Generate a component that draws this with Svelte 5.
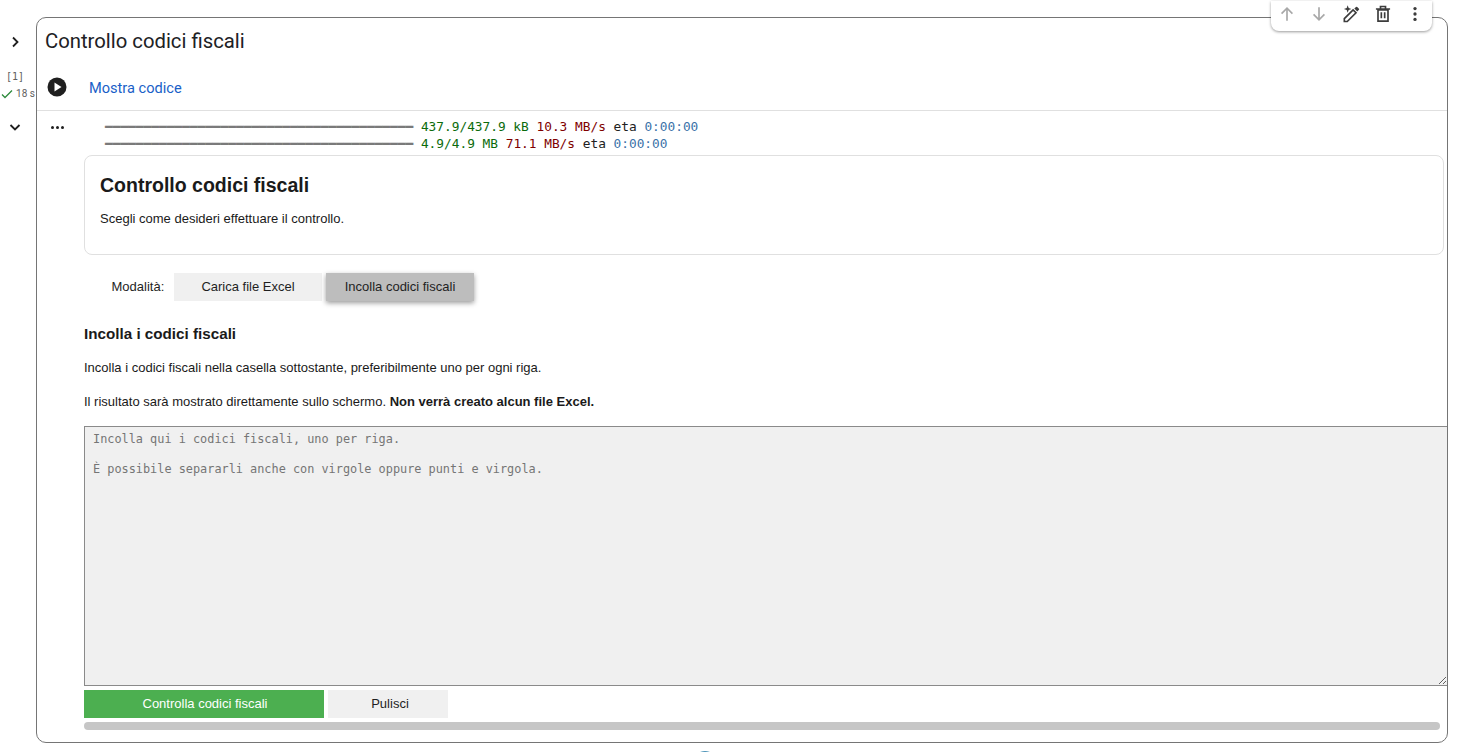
<script>
  const bar = '━'.repeat(40);
</script>

<div class="page">
  <div class="gutter">
    <button class="icon-btn toggle" aria-label="Espandi">
      <svg width="14" height="14" viewBox="0 0 14 14"><path d="M5 2.5 9.5 7 5 11.5" /></svg>
    </button>
    <div class="exec">
      <span class="count">[1]</span>
      <span class="time">
        <svg width="12" height="10" viewBox="0 0 12 10"><path d="M1 5.5 4 8.5 11 1.5" /></svg>
        18 s
      </span>
    </div>
    <button class="icon-btn collapse" aria-label="Comprimi">
      <svg width="14" height="14" viewBox="0 0 14 14"><path d="M2.5 5 7 9.5 11.5 5" /></svg>
    </button>
  </div>

  <div class="cell">
    <div class="toolbar">
      <svg class="muted" width="20" height="20" viewBox="0 0 24 24"><path d="M12 20V5M5.5 11.5 12 5l6.5 6.5" /></svg>
      <svg class="muted" width="20" height="20" viewBox="0 0 24 24"><path d="M12 4v15M5.5 12.5 12 19l6.5-6.5" /></svg>
      <svg width="20" height="20" viewBox="0 0 24 24">
        <path d="M4 21v-3.5L14.5 7l3.5 3.5L7.5 21z" />
        <path class="solid" d="M16 5.5l2-2a1 1 0 0 1 1.4 0l2.1 2.1a1 1 0 0 1 0 1.4l-2 2z" />
        <path class="solid" d="M8 1.5l1.2 3.3 3.3 1.2-3.3 1.2L8 10.5 6.8 7.2 3.5 6l3.3-1.2z" />
      </svg>
      <svg width="20" height="20" viewBox="0 0 24 24">
        <path d="M6 7h12v13.5H6zM3.5 6h17M9 6V3h6v3M10 10v7M14 10v7" />
      </svg>
      <svg width="20" height="20" viewBox="0 0 24 24">
        <circle class="solid" cx="12" cy="5.5" r="2" /><circle class="solid" cx="12" cy="12" r="2" /><circle class="solid" cx="12" cy="18.5" r="2" />
      </svg>
    </div>

    <h2 class="cell-title">Controllo codici fiscali</h2>

    <div class="code-row">
      <button class="run" aria-label="Esegui">
        <svg width="20" height="20" viewBox="0 0 20 20"><circle cx="10" cy="10" r="9.5" fill="#1f1f1f" /><path class="play" d="M7.5 5.5v9l7-4.5z" /></svg>
      </button>
      <a class="show-code" href="#top">Mostra codice</a>
    </div>

    <div class="output">
      <div class="output-dots"><i></i><i></i><i></i></div>
      <div class="output-body">
        <pre class="log"><span class="dim">{bar}</span> <span class="green">437.9/437.9 kB</span> <span class="red">10.3 MB/s</span> eta <span class="blue">0:00:00</span>
<span class="dim">{bar}</span> <span class="green">4.9/4.9 MB</span> <span class="red">71.1 MB/s</span> eta <span class="blue">0:00:00</span></pre>

        <div class="intro">
          <h2>Controllo codici fiscali</h2>
          <p>Scegli come desideri effettuare il controllo.</p>
        </div>

        <div class="modes">
          <span class="modes-label">Modalità:</span>
          <button class="btn mode">Carica file Excel</button>
          <button class="btn mode active">Incolla codici fiscali</button>
        </div>

        <h4>Incolla i codici fiscali</h4>
        <p class="line">Incolla i codici fiscali nella casella sottostante, preferibilmente uno per ogni riga.</p>
        <p class="line">Il risultato sarà mostrato direttamente sullo schermo. <b>Non verrà creato alcun file Excel.</b></p>

        <textarea class="codes" placeholder={'Incolla qui i codici fiscali, uno per riga.\n\nÈ possibile separarli anche con virgole oppure punti e virgola.'}></textarea>

        <div class="actions">
          <button class="btn primary">Controlla codici fiscali</button>
          <button class="btn clear">Pulisci</button>
        </div>
        <div class="scrollbar"></div>
      </div>
    </div>
  </div>
</div>
<div class="fab"></div>

<style>
  :global(body) {
    background: #fff;
    overflow: hidden;
  }
  .page {
    display: flex;
    align-items: flex-start;
    height: 752px;
    box-sizing: border-box;
    padding: 17px 11px 0 0;
    color: #1f1f1f;
    font-family: "Liberation Sans", Arial, sans-serif;
  }
  svg path {
    fill: none;
    stroke: currentColor;
    stroke-width: 2;
  }
  svg .solid {
    fill: currentColor;
    stroke: none;
  }
  svg .play {
    fill: #fff;
    stroke: none;
  }
  button {
    font-family: inherit;
  }
  .gutter {
    width: 36px;
    flex: none;
    display: flex;
    flex-direction: column;
    align-items: center;
  }
  .icon-btn {
    display: flex;
    padding: 0;
    border: 0;
    background: none;
    color: #1f1f1f;
  }
  .icon-btn svg path {
    stroke-width: 1.8;
  }
  .toggle {
    margin: 18px 0 0 -6px;
  }
  .exec {
    margin-top: 21px;
    display: flex;
    flex-direction: column;
    align-items: center;
    color: #616161;
  }
  .count {
    font: 10px/14px "DejaVu Sans Mono", monospace;
    margin-left: -6px;
  }
  .time {
    display: flex;
    align-items: center;
    gap: 3px;
    font: 10px/20px Roboto, sans-serif;
    white-space: nowrap;
  }
  .time svg {
    color: #2e8b3d;
  }
  .time svg path {
    stroke-width: 1.3;
  }
  .collapse {
    margin: 16px 0 0 -6px;
  }
  .cell {
    position: relative;
    flex: 1;
    min-width: 0;
    height: 726px;
    box-sizing: border-box;
    border: 1px solid #757575;
    border-radius: 10px;
    overflow: visible;
  }
  .toolbar {
    position: absolute;
    top: -17px;
    right: 15px;
    width: 161px;
    height: 30px;
    box-sizing: border-box;
    display: flex;
    align-items: center;
    justify-content: center;
    gap: 12px;
    padding: 0 2px 4px 0;
    color: #3c3c3c;
    background: #fff;
    border-radius: 0 0 8px 8px;
    box-shadow: 0 1px 3px rgba(0, 0, 0, 0.4);
  }
  .toolbar .muted {
    color: #a8a8a8;
  }
  .cell-title {
    margin: 0;
    padding: 10px 8px 0;
    font: 400 20.3px/26px Roboto, sans-serif;
    color: #202124;
  }
  .code-row {
    display: flex;
    align-items: center;
    height: 46px;
    margin-top: 8px;
    padding-bottom: 2px;
    border-bottom: 1px solid #e0e0e0;
  }
  .run {
    display: flex;
    padding: 0;
    border: 0;
    background: none;
    margin: 3px 0 0 10px;
  }
  .show-code {
    margin: 6px 0 0 22px;
    font: 400 14.6px/20px Roboto, sans-serif;
    color: #1a5fc8;
    text-decoration: none;
  }
  .output {
    display: flex;
    overflow: hidden;
  }
  .output-dots {
    width: 47px;
    flex: none;
    display: flex;
    gap: 2px;
    padding: 15px 0 0 14px;
    box-sizing: border-box;
    height: 20px;
  }
  .output-dots i {
    width: 3px;
    height: 3px;
    border-radius: 50%;
    background: #1f1f1f;
  }
  .output-body {
    flex: 1;
    min-width: 0;
  }
  .log {
    margin: 0;
    padding: 7px 0 0 21px;
    font: 12.8px/17px "DejaVu Sans Mono", monospace;
    color: #212121;
  }
  .dim {
    color: #7a7a7a;
  }
  .green {
    color: #0b6b0b;
  }
  .red {
    color: #800000;
  }
  .blue {
    color: #3a72a8;
  }
  .intro {
    margin: 3px 3px 0 0;
    height: 100px;
    box-sizing: border-box;
    padding: 17px 15px 0;
    border: 1px solid #e0e0e0;
    border-radius: 8px;
  }
  .intro h2 {
    margin: 0;
    font-size: 19.5px;
    line-height: 24px;
    font-weight: 700;
    color: #1a1a1a;
  }
  .intro p {
    margin: 14px 0 0;
    font-size: 13px;
    line-height: 16px;
    color: #1a1a1a;
  }
  .modes {
    display: flex;
    align-items: center;
    margin-top: 18px;
  }
  .modes-label {
    width: 90px;
    box-sizing: border-box;
    padding: 0 0 2px 27.5px;
    font-size: 13px;
  }
  .btn {
    height: 28px;
    padding: 0 0 2px;
    border: 0;
    font-size: 13px;
    color: #1f1f1f;
    background: #f0f0f0;
  }
  .mode {
    width: 148px;
  }
  .mode.active {
    margin-left: 4px;
    background: #bdbdbd;
    box-shadow: 0 2px 5px rgba(0, 0, 0, 0.4);
  }
  h4 {
    margin: 24px 0 0;
    font-size: 15.21px;
    line-height: 18px;
    font-weight: 700;
    color: #1a1a1a;
  }
  .line {
    margin: 16px 0 0;
    font-size: 13px;
    line-height: 18px;
    color: #1a1a1a;
  }
  .codes {
    display: block;
    width: calc(100% + 1px);
    height: 260px;
    margin-top: 15px;
    box-sizing: border-box;
    padding: 5px 8px;
    border: 1px solid #8a8a8a;
    border-right-color: #f0f0f0;
    border-radius: 0;
    outline: none;
    background: #f0f0f0;
    font: 11.87px/15px "DejaVu Sans Mono", monospace;
  }
  .codes::placeholder {
    color: #757575;
    opacity: 1;
  }
  .actions {
    display: flex;
    gap: 4px;
    margin-top: 4px;
  }
  .primary {
    width: 240px;
    padding-left: 2px;
    background: #4caf50;
    color: #fff;
  }
  .clear {
    width: 120px;
    padding-left: 4px;
  }
  .scrollbar {
    height: 8px;
    margin: 4px 7px 0 0;
    border-radius: 4px;
    background: #c6c6c6;
  }
  .fab {
    position: fixed;
    left: 694px;
    top: 751px;
    width: 22px;
    height: 22px;
    border-radius: 50%;
    background: #4d94b8;
  }
</style>
